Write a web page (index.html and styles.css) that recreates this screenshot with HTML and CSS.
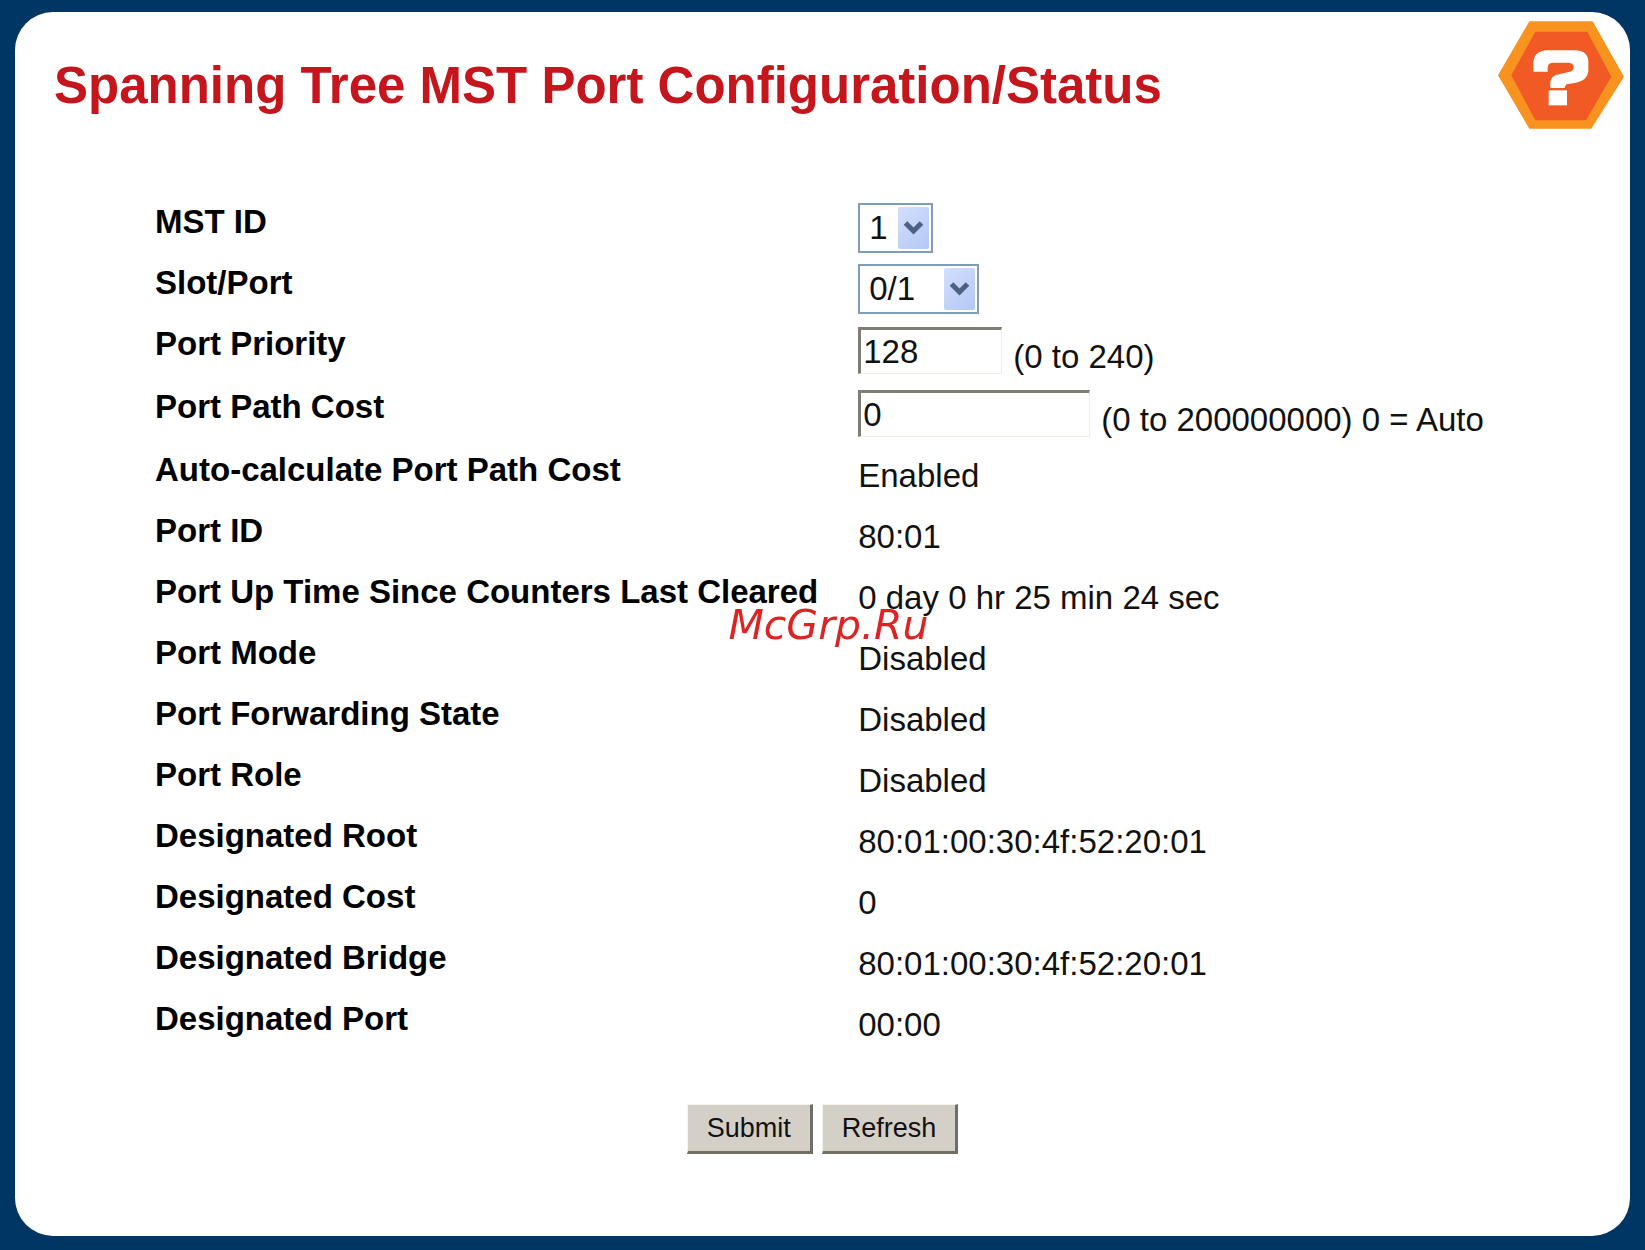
FILE: index.html
```html
<!DOCTYPE html>
<html lang="en">

<head>
    <meta charset="UTF-8">
    <meta name="viewport" content="width=device-width, initial-scale=1.0">
    <title>Spanning Tree MST Port Configuration/Status</title>
    <link rel="stylesheet" href="styles.css">
</head>

<body>

    <form class="panel">
        <div class="header">
            <h1>Spanning Tree MST Port Configuration/Status</h1>
            <button type="button" class="help" aria-label="Help">
                <svg viewBox="158 62 378 322">
                    <polygon fill="#f7931e" points="252,62 442,62 536,228 438,384 252,384 158,224" />
                    <polygon fill="#f15a24" points="270,93 426,93 498,228 422,359 270,359 198,224" />
                    <path fill="#fff" d="M264 213 V186 Q266 150 306 149 H392 Q429 152 429 184 V212 Q426 240 392 246 L364 251 Q359 254 358 262 H315 V244 Q317 226 340 221 L374 213 Q385 210 385 199 Q384 187 370 186 H322 Q308 187 307 200 V213 Z" />
                    <rect fill="#fff" x="310" y="269" width="55" height="45" />
                </svg>
            </button>
        </div>

        <table class="settings">
            <tr>
                <th scope="row"><label for="mstId">MST ID</label></th>
                <td>
                    <span class="dropdown">
                        <select id="mstId"><option>1</option></select>
                        <svg viewBox="0 0 30 42"><path d="M7 16 L15 24 L23 16" /></svg>
                    </span>
                </td>
            </tr>
            <tr>
                <th scope="row"><label for="slotPort">Slot/Port</label></th>
                <td>
                    <span class="dropdown wide">
                        <select id="slotPort"><option>0/1</option></select>
                        <svg viewBox="0 0 30 42"><path d="M7 16 L15 24 L23 16" /></svg>
                    </span>
                </td>
            </tr>
            <tr class="entry">
                <th scope="row"><label for="priority">Port Priority</label></th>
                <td>
                    <div class="field">
                        <input type="text" id="priority" class="short" value="128">
                        <span>(0 to 240)</span>
                    </div>
                </td>
            </tr>
            <tr class="entry">
                <th scope="row"><label for="pathCost">Port Path Cost</label></th>
                <td>
                    <div class="field">
                        <input type="text" id="pathCost" value="0">
                        <span>(0 to 200000000) 0 = Auto</span>
                    </div>
                </td>
            </tr>
            <tr>
                <th scope="row">Auto-calculate Port Path Cost</th>
                <td class="value">Enabled</td>
            </tr>
            <tr>
                <th scope="row">Port ID</th>
                <td class="value">80:01</td>
            </tr>
            <tr>
                <th scope="row">Port Up Time Since Counters Last Cleared</th>
                <td class="value">0 day 0 hr 25 min 24 sec</td>
            </tr>
            <tr>
                <th scope="row">Port Mode</th>
                <td class="value">Disabled</td>
            </tr>
            <tr>
                <th scope="row">Port Forwarding State</th>
                <td class="value">Disabled</td>
            </tr>
            <tr>
                <th scope="row">Port Role</th>
                <td class="value">Disabled</td>
            </tr>
            <tr>
                <th scope="row">Designated Root</th>
                <td class="value">80:01:00:30:4f:52:20:01</td>
            </tr>
            <tr>
                <th scope="row">Designated Cost</th>
                <td class="value">0</td>
            </tr>
            <tr>
                <th scope="row">Designated Bridge</th>
                <td class="value">80:01:00:30:4f:52:20:01</td>
            </tr>
            <tr>
                <th scope="row">Designated Port</th>
                <td class="value">00:00</td>
            </tr>
        </table>

        <div class="buttons">
            <button type="submit">Submit</button>
            <button type="button">Refresh</button>
        </div>
    </form>

    <div class="watermark">McGrp.Ru</div>

</body>

</html>
```

FILE: styles.css
```css
* {
    margin: 0;
    padding: 0;
    box-sizing: border-box;
}

body {
    display: flex;
    min-height: 100vh;
    padding: 12px 15px 14px;
    background-color: #003663;
    font-family: "Liberation Sans", Arial, sans-serif;
    font-size: 33px;
    line-height: 38px;
    color: #111;
}

.panel {
    flex: 1;
    background-color: #fff;
    border-radius: 38px;
}

.header {
    display: flex;
    justify-content: space-between;
    align-items: flex-start;
    padding: 9px 6px 0 39px;
}

h1 {
    margin-top: 36px;
    font-size: 51px;
    line-height: 58px;
    color: #c4161c;
}

.help {
    width: 126px;
    height: 108px;
    background: none;
    border: none;
    cursor: pointer;
}

.help svg {
    display: block;
    width: 100%;
    height: 100%;
}

/* settings table */
.settings {
    margin: 74px 0 0 140px;
    border-collapse: collapse;
}

.settings tr {
    height: 61px;
}

.settings .entry {
    height: 63px;
}

th,
td {
    text-align: left;
    vertical-align: top;
    white-space: nowrap;
}

th {
    padding-right: 40px;
    color: #000;
}

.value {
    padding-top: 6px;
}

select,
input {
    font: inherit;
    color: inherit;
    background-color: #fff;
    border-radius: 0;
    outline: none;
}

/* drop-downs */
.dropdown {
    display: block;
    position: relative;
    width: 75px;
    height: 50px;
}

.dropdown.wide {
    width: 121px;
}

select {
    appearance: none;
    width: 100%;
    height: 100%;
    padding-left: 9px;
    border: 2px solid #7f9db9;
}

.dropdown svg {
    position: absolute;
    top: 4px;
    right: 4px;
    width: 31px;
    height: 42px;
    background: linear-gradient(135deg, #d3dffc, #b4c8f6);
    border-radius: 2px;
    pointer-events: none;
}

.dropdown path {
    fill: none;
    stroke: #4d6185;
    stroke-width: 5;
}

/* text boxes */
.field {
    display: flex;
    align-items: flex-start;
    gap: 11px;
    padding-top: 2px;
}

input {
    width: 232px;
    height: 47px;
    padding: 0 2px;
    border: 1px solid #f1efe2;
    border-top: 3px solid #807d74;
    border-left: 3px solid #807d74;
}

input.short {
    width: 144px;
}

.field span {
    padding-top: 11px;
}

/* buttons */
.buttons {
    display: flex;
    justify-content: center;
    gap: 9px;
    margin-top: 43px;
}

.buttons button {
    height: 50px;
    padding: 0 19px;
    font-family: inherit;
    font-size: 27px;
    color: #111;
    background-color: #d4d0c8;
    border: 1px solid #f4f3f0;
    border-right: 3px solid #716f64;
    border-bottom: 3px solid #716f64;
    cursor: pointer;
}

.watermark {
    position: fixed;
    inset: 0;
    display: grid;
    place-items: center;
    padding-left: 12px;
    font-family: "DejaVu Sans", Verdana, sans-serif;
    font-size: 41px;
    font-style: italic;
    color: #dd2424;
    pointer-events: none;
}
```
